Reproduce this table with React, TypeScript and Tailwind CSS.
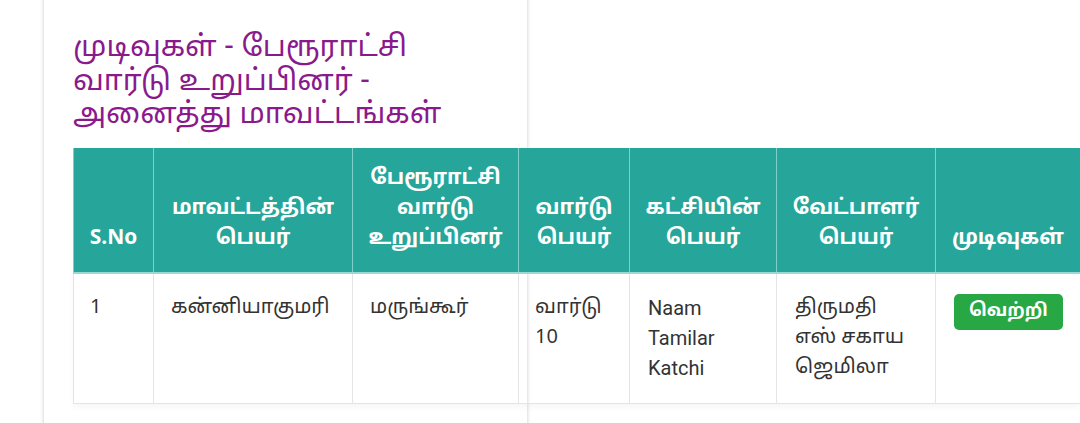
import React from 'react';

const tamil = { fontFamily: '"Noto Sans Tamil", Roboto, "Noto Sans", sans-serif' };

const headers = [
  'S.No',
  'மாவட்டத்தின் பெயர்',
  'பேரூராட்சி வார்டு உறுப்பினர்',
  'வார்டு பெயர்',
  'கட்சியின் பெயர்',
  'வேட்பாளர் பெயர்',
  'முடிவுகள்',
];

const widths = ['w-[80px]', 'w-[199px]', 'w-[166px]', 'w-[111px]', 'w-[147px]', 'w-[159px]', 'w-[145px]'];

const App = () => {
  return (
    <div className="h-[423px] w-[1080px] overflow-hidden bg-white" style={tamil}>
      <div className="ml-[44px] mt-[-20px] h-[480px] w-[483px] bg-white pl-[29px] pt-[52px] shadow-[0_0_4px_rgba(0,0,0,0.22)]">
        <h1 className="text-[29.5px] leading-[33.5px] font-normal text-[#8a1a8c]">
          முடிவுகள் - பேரூராட்சி
          <br />
          வார்டு உறுப்பினர் -
          <br />
          அனைத்து மாவட்டங்கள்
        </h1>

        <table className="mt-[15px] w-[1007px] table-fixed border-collapse text-[20px] leading-[30px] shadow-[0_4px_6px_rgba(0,0,0,0.03)]">
          <colgroup>
            {widths.map((w, i) => (
              <col key={i} className={w} />
            ))}
          </colgroup>
          <thead>
            <tr className="bg-[#26a69a] text-white">
              {headers.map((h, i) => (
                <th
                  key={i}
                  className="border-x border-b-2 border-x-[#7fd0c8] border-b-[#9ad9d2] px-2 pt-[16px] pb-[18px] text-center align-bottom text-[21px] font-bold"
                >
                  {h}
                </th>
              ))}
            </tr>
          </thead>
          <tbody className="text-[#333333]">
            <tr>
              <td className="border border-[#e2e5e8] px-4 pt-[19px] pb-[20px] align-top">1</td>
              <td className="border border-[#e2e5e8] px-[17px] pt-[19px] pb-[20px] align-top">கன்னியாகுமரி</td>
              <td className="border border-[#e2e5e8] px-[17px] pt-[19px] pb-[20px] align-top">மருங்கூர்</td>
              <td className="border border-[#e2e5e8] px-4 pt-[19px] pb-[20px] align-top">
                வார்டு
                <br />
                10
              </td>
              <td className="border border-[#e2e5e8] px-[18px] pt-[19px] pb-[20px] align-top" style={{ fontFamily: 'Roboto, sans-serif' }}>
                Naam
                <br />
                Tamilar
                <br />
                Katchi
              </td>
              <td className="border border-[#e2e5e8] px-[18px] pt-[19px] pb-[20px] align-top">
                திருமதி
                <br />
                எஸ் சகாய
                <br />
                ஜெமிலா
              </td>
              <td className="border border-[#e2e5e8] px-[18px] pt-[20px] pb-[20px] align-top">
                <span className="inline-block rounded-[5px] bg-[#28a745] px-[15px] py-[4px] text-[18px] leading-[28px] font-bold text-white">
                  வெற்றி
                </span>
              </td>
            </tr>
          </tbody>
        </table>
      </div>
    </div>
  );
};

export default App;
